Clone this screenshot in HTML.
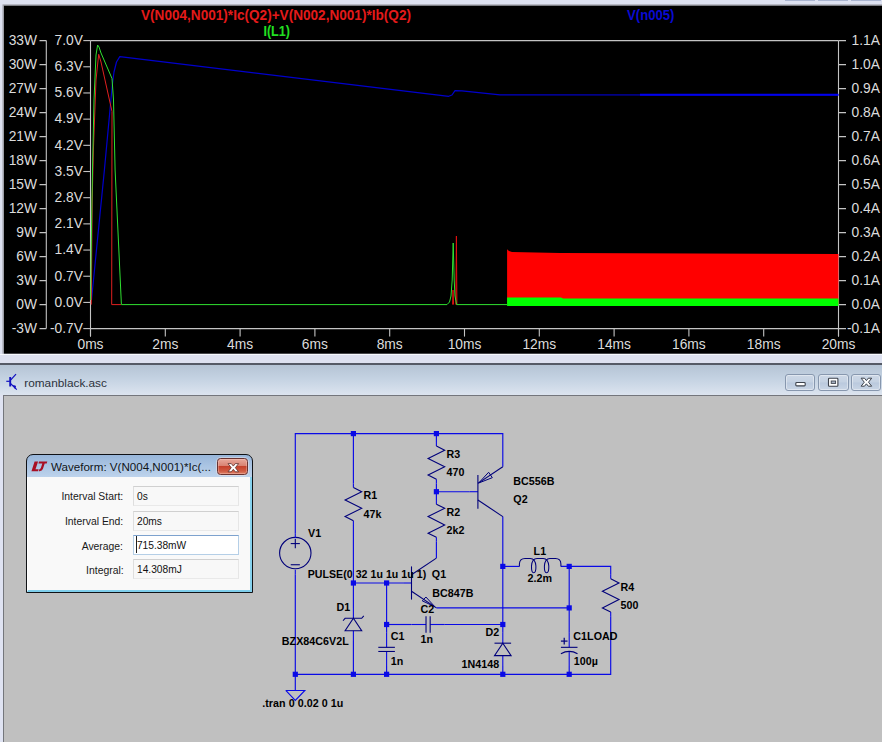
<!DOCTYPE html>
<html><head><meta charset="utf-8"><title>LTspice</title>
<style>
html,body{margin:0;padding:0;}
body{width:882px;height:742px;overflow:hidden;background:#c0c0c0;font-family:"Liberation Sans",sans-serif;position:relative;}
#top{position:absolute;left:0;top:0;width:882px;height:364px;background:#dde1f0;}
#topline{position:absolute;left:0;top:353.7px;width:882px;height:1.6px;background:#f6f8fd;}
#sep{position:absolute;left:0;top:362.6px;width:882px;height:2px;background:#555a66;}
#tbar{position:absolute;left:0;top:364.6px;width:882px;height:30px;background:linear-gradient(#b5c4d5,#c4d2e2 45%,#dce4ef 100%);}
#tbar2{position:absolute;left:0;top:394px;width:882px;height:348px;background:#dfe3f2;}
#client{position:absolute;left:2.5px;top:394.5px;width:879.5px;height:348px;background:#c0c0c0;border-left:1.3px solid #74767c;border-top:1.7px solid #74767c;box-sizing:border-box;}
svg{position:absolute;left:0;top:0;}
.plot text{font-size:13.8px;fill:#dcdcdc;}
.sch text{font-size:10.7px;font-weight:bold;fill:#000;letter-spacing:0.05px;}
.ttl{position:absolute;left:24.3px;top:374.2px;font-size:11.8px;color:#2c323c;line-height:18px;}
.wb{position:absolute;top:374.4px;height:16.3px;border:1px solid #8797ae;border-radius:3px;box-sizing:border-box;background:linear-gradient(#cdd8e6,#c4d1e2 48%,#bac9dd 52%,#c9d5e5);box-shadow:inset 0 0 0 1px rgba(255,255,255,0.4);}
#dlg{position:absolute;left:26px;top:453.6px;width:227px;height:139px;box-sizing:border-box;border:1.1px solid #101216;border-radius:7px 7px 0 0;background:linear-gradient(#98b6da,#bdd3ec 22px,#c4d9f1 24px,#cfe0f4);}
#dlgin{position:absolute;left:0;top:22.9px;right:0;bottom:0;background:#f9f9f9;border-left:1.4px solid #fff;border-right:2px solid #86d2ee;border-bottom:2.2px solid #7fcfec;box-sizing:border-box;}
.dt{position:absolute;left:24px;top:4.5px;font-size:11.6px;color:#101418;line-height:16px;white-space:nowrap;}
.fl{position:absolute;right:128.5px;font-size:11.8px;color:#181818;white-space:nowrap;transform-origin:right center;transform:scaleX(0.88);line-height:14px;}
.fi{position:absolute;left:105.8px;width:106.6px;height:20px;box-sizing:border-box;border:1px solid #dedede;border-top-color:#d0d0d0;border-bottom-color:#e9e9e9;border-right-color:#e6e6e6;background:#f8f8f8;font-size:11.6px;line-height:17.4px;}
.fi span{display:inline-block;transform-origin:left center;transform:scaleX(0.88);padding-left:3.4px;color:#111;}
#cls{position:absolute;left:189.8px;top:3.4px;width:31px;height:16.6px;box-sizing:border-box;border:1px solid #6a3230;border-radius:3.5px;box-shadow:0 0 0 0.8px rgba(255,235,230,0.55), inset 0 0 0 1px rgba(255,210,200,0.35);background:linear-gradient(#e8a99c,#d98272 45%,#c5412c 50%,#cf5a42 80%,#dd8268);}
</style></head><body>
<div id="top"></div>
<div id="tbar2"></div>
<div id="tbar"></div>
<div id="sep"></div>
<div id="client"></div>
<svg class="plot" width="882" height="364" viewBox="0 0 882 364">
<rect x="2.5" y="4.4" width="880" height="349.3" fill="#9c9ea6"/>
<rect x="4.0" y="5.8" width="879" height="347.8" fill="#000"/>
<path d="M90.5 40.6 H838.5 M90.5 328.6 H838.5 M90.5 40.6 V336.6 M838.5 40.6 V336.6" stroke="#c4c4c4" stroke-width="1.1" fill="none"/>
<path d="M46.3 40.6 V328.6" stroke="#c4c4c4" stroke-width="1.1" fill="none"/>
<path d="M39.5 40.6 H46.3 M838.5 40.6 H846.0" stroke="#c4c4c4" stroke-width="1.1"/>
<text x="37" y="44.9" text-anchor="end">33W</text>
<text x="880" y="44.9" text-anchor="end">1.1A</text>
<path d="M39.5 64.6 H46.3 M838.5 64.6 H846.0" stroke="#c4c4c4" stroke-width="1.1"/>
<text x="37" y="68.89999999999999" text-anchor="end">30W</text>
<text x="880" y="68.89999999999999" text-anchor="end">1.0A</text>
<path d="M39.5 88.6 H46.3 M838.5 88.6 H846.0" stroke="#c4c4c4" stroke-width="1.1"/>
<text x="37" y="92.89999999999999" text-anchor="end">27W</text>
<text x="880" y="92.89999999999999" text-anchor="end">0.9A</text>
<path d="M39.5 112.6 H46.3 M838.5 112.6 H846.0" stroke="#c4c4c4" stroke-width="1.1"/>
<text x="37" y="116.89999999999999" text-anchor="end">24W</text>
<text x="880" y="116.89999999999999" text-anchor="end">0.8A</text>
<path d="M39.5 136.6 H46.3 M838.5 136.6 H846.0" stroke="#c4c4c4" stroke-width="1.1"/>
<text x="37" y="140.9" text-anchor="end">21W</text>
<text x="880" y="140.9" text-anchor="end">0.7A</text>
<path d="M39.5 160.6 H46.3 M838.5 160.6 H846.0" stroke="#c4c4c4" stroke-width="1.1"/>
<text x="37" y="164.9" text-anchor="end">18W</text>
<text x="880" y="164.9" text-anchor="end">0.6A</text>
<path d="M39.5 184.6 H46.3 M838.5 184.6 H846.0" stroke="#c4c4c4" stroke-width="1.1"/>
<text x="37" y="188.9" text-anchor="end">15W</text>
<text x="880" y="188.9" text-anchor="end">0.5A</text>
<path d="M39.5 208.6 H46.3 M838.5 208.6 H846.0" stroke="#c4c4c4" stroke-width="1.1"/>
<text x="37" y="212.9" text-anchor="end">12W</text>
<text x="880" y="212.9" text-anchor="end">0.4A</text>
<path d="M39.5 232.6 H46.3 M838.5 232.6 H846.0" stroke="#c4c4c4" stroke-width="1.1"/>
<text x="37" y="236.9" text-anchor="end">9W</text>
<text x="880" y="236.9" text-anchor="end">0.3A</text>
<path d="M39.5 256.6 H46.3 M838.5 256.6 H846.0" stroke="#c4c4c4" stroke-width="1.1"/>
<text x="37" y="260.90000000000003" text-anchor="end">6W</text>
<text x="880" y="260.90000000000003" text-anchor="end">0.2A</text>
<path d="M39.5 280.6 H46.3 M838.5 280.6 H846.0" stroke="#c4c4c4" stroke-width="1.1"/>
<text x="37" y="284.90000000000003" text-anchor="end">3W</text>
<text x="880" y="284.90000000000003" text-anchor="end">0.1A</text>
<path d="M39.5 304.6 H46.3 M838.5 304.6 H846.0" stroke="#c4c4c4" stroke-width="1.1"/>
<text x="37" y="308.90000000000003" text-anchor="end">0W</text>
<text x="880" y="308.90000000000003" text-anchor="end">0.0A</text>
<path d="M39.5 328.6 H46.3 M838.5 328.6 H846.0" stroke="#c4c4c4" stroke-width="1.1"/>
<text x="37" y="332.90000000000003" text-anchor="end">-3W</text>
<text x="880" y="332.90000000000003" text-anchor="end">-0.1A</text>
<path d="M83.3 40.60 H90.5" stroke="#c4c4c4" stroke-width="1.1"/>
<text x="83" y="44.90" text-anchor="end">7.0V</text>
<path d="M83.3 66.78 H90.5" stroke="#c4c4c4" stroke-width="1.1"/>
<text x="83" y="71.08" text-anchor="end">6.3V</text>
<path d="M83.3 92.96 H90.5" stroke="#c4c4c4" stroke-width="1.1"/>
<text x="83" y="97.26" text-anchor="end">5.6V</text>
<path d="M83.3 119.15 H90.5" stroke="#c4c4c4" stroke-width="1.1"/>
<text x="83" y="123.45" text-anchor="end">4.9V</text>
<path d="M83.3 145.33 H90.5" stroke="#c4c4c4" stroke-width="1.1"/>
<text x="83" y="149.63" text-anchor="end">4.2V</text>
<path d="M83.3 171.51 H90.5" stroke="#c4c4c4" stroke-width="1.1"/>
<text x="83" y="175.81" text-anchor="end">3.5V</text>
<path d="M83.3 197.69 H90.5" stroke="#c4c4c4" stroke-width="1.1"/>
<text x="83" y="201.99" text-anchor="end">2.8V</text>
<path d="M83.3 223.87 H90.5" stroke="#c4c4c4" stroke-width="1.1"/>
<text x="83" y="228.17" text-anchor="end">2.1V</text>
<path d="M83.3 250.05 H90.5" stroke="#c4c4c4" stroke-width="1.1"/>
<text x="83" y="254.35" text-anchor="end">1.4V</text>
<path d="M83.3 276.24 H90.5" stroke="#c4c4c4" stroke-width="1.1"/>
<text x="83" y="280.54" text-anchor="end">0.7V</text>
<path d="M83.3 302.42 H90.5" stroke="#c4c4c4" stroke-width="1.1"/>
<text x="83" y="306.72" text-anchor="end">0.0V</text>
<path d="M83.3 328.60 H90.5" stroke="#c4c4c4" stroke-width="1.1"/>
<text x="83" y="332.90" text-anchor="end">-0.7V</text>
<path d="M90.50 328.6 V336.6" stroke="#c4c4c4" stroke-width="1.1"/>
<text x="90.50" y="349.1" text-anchor="middle">0ms</text>
<path d="M165.30 328.6 V336.6" stroke="#c4c4c4" stroke-width="1.1"/>
<text x="165.30" y="349.1" text-anchor="middle">2ms</text>
<path d="M240.10 328.6 V336.6" stroke="#c4c4c4" stroke-width="1.1"/>
<text x="240.10" y="349.1" text-anchor="middle">4ms</text>
<path d="M314.90 328.6 V336.6" stroke="#c4c4c4" stroke-width="1.1"/>
<text x="314.90" y="349.1" text-anchor="middle">6ms</text>
<path d="M389.70 328.6 V336.6" stroke="#c4c4c4" stroke-width="1.1"/>
<text x="389.70" y="349.1" text-anchor="middle">8ms</text>
<path d="M464.50 328.6 V336.6" stroke="#c4c4c4" stroke-width="1.1"/>
<text x="464.50" y="349.1" text-anchor="middle">10ms</text>
<path d="M539.30 328.6 V336.6" stroke="#c4c4c4" stroke-width="1.1"/>
<text x="539.30" y="349.1" text-anchor="middle">12ms</text>
<path d="M614.10 328.6 V336.6" stroke="#c4c4c4" stroke-width="1.1"/>
<text x="614.10" y="349.1" text-anchor="middle">14ms</text>
<path d="M688.90 328.6 V336.6" stroke="#c4c4c4" stroke-width="1.1"/>
<text x="688.90" y="349.1" text-anchor="middle">16ms</text>
<path d="M763.70 328.6 V336.6" stroke="#c4c4c4" stroke-width="1.1"/>
<text x="763.70" y="349.1" text-anchor="middle">18ms</text>
<path d="M838.50 328.6 V336.6" stroke="#c4c4c4" stroke-width="1.1"/>
<text x="838.50" y="349.1" text-anchor="middle">20ms</text>
<path d="M507.1 304.6 V249.2 L509 251 L512 252 L560 253 L838.5 254 V304.6 Z" fill="#ff0000"/>
<path d="M507.1 297.5 H561 L563 298.5 H838.5 V306 H507.1 Z" fill="#00ff00"/>
<path d="M91.5 300 L104.4 170 L112.3 85 L114 72 L116.5 62 L119.8 56.6 L448.7 96.3 L452 95 L455 90.6 L462 90.8 L500 94.9 L838.5 95" stroke="#0000cc" stroke-width="1.2" fill="none" stroke-linejoin="round"/>
<path d="M640 94.75 H838.5" stroke="#0000ee" stroke-width="2.1" fill="none"/>
<path d="M91.3 304.6 L92.2 200 L93.4 150 L96 80 L98.7 54.3 L101 62 L112 111.5 L111.7 304.6 H121" stroke="#e02020" stroke-width="1" fill="none"/>
<path d="M452.6 304.6 L453 290 L453.6 304.6 M455.8 304.6 L456.4 236 L456.9 304.6" stroke="#e01010" stroke-width="1" fill="none"/>
<path d="M90.6 300 L91.5 230 L92.5 170 L94 100 L96 55 L97.6 45 L99 47 L101 53 L112 78.5 L113.5 100 L115.1 170 L121.4 304.6 H447 L449.5 302 L451 296 L452.2 280 L453.2 243 L454.2 280 L455 296 L456.6 304.6 H507.1" stroke="#30e030" stroke-width="1" fill="none"/>
<g font-weight="bold" font-size="13.4px">
<text x="141.0" y="19.6" style="fill:#e41a1a;font-size:14.6px" textLength="270" lengthAdjust="spacingAndGlyphs">V(N004,N001)*Ic(Q2)+V(N002,N001)*Ib(Q2)</text>
<text x="263.4" y="35.5" style="fill:#22e022;font-size:14.6px" textLength="26.6" lengthAdjust="spacingAndGlyphs">I(L1)</text>
<text x="627" y="19.6" style="fill:#0a0ad2;font-size:14.6px" textLength="47.5" lengthAdjust="spacingAndGlyphs">V(n005)</text>
</g>
</svg>
<div id="topline"></div>
<div style="position:absolute;left:785px;top:0;width:30px;height:1px;background:#a9b4cf"></div><div style="position:absolute;left:818px;top:0;width:30px;height:1px;background:#a9b4cf"></div><div style="position:absolute;left:851px;top:0;width:29.5px;height:1px;background:#a9b4cf"></div>
<svg class="sch" width="882" height="742" viewBox="0 0 882 742">
<path d="M295.3 533.2 L295.3 433.6 L502.8 433.6 L502.8 466.8" stroke="#0a0ae6" fill="none" stroke-width="1.15"/>
<path d="M353.4 433.6 L353.4 483.4" stroke="#0a0ae6" fill="none" stroke-width="1.15"/>
<path d="M353.4 524.9 L353.4 607.9" stroke="#0a0ae6" fill="none" stroke-width="1.15"/>
<path d="M353.4 641.1 L353.4 674.3" stroke="#0a0ae6" fill="none" stroke-width="1.15"/>
<path d="M436.4 433.6 L436.4 441.9" stroke="#0a0ae6" fill="none" stroke-width="1.15"/>
<path d="M436.4 483.4 L436.4 500.0" stroke="#0a0ae6" fill="none" stroke-width="1.15"/>
<path d="M436.4 491.7 L469.6 491.7" stroke="#0a0ae6" fill="none" stroke-width="1.15"/>
<path d="M436.4 541.5 L436.4 558.1" stroke="#0a0ae6" fill="none" stroke-width="1.15"/>
<path d="M353.4 583.0 L403.2 583.0" stroke="#0a0ae6" fill="none" stroke-width="1.15"/>
<path d="M386.6 583.0 L386.6 632.8" stroke="#0a0ae6" fill="none" stroke-width="1.15"/>
<path d="M386.6 666.0 L386.6 674.3" stroke="#0a0ae6" fill="none" stroke-width="1.15"/>
<path d="M386.6 624.5 L411.5 624.5" stroke="#0a0ae6" fill="none" stroke-width="1.15"/>
<path d="M444.7 624.5 L502.8 624.5" stroke="#0a0ae6" fill="none" stroke-width="1.15"/>
<path d="M436.4 607.9 L569.2 607.9" stroke="#0a0ae6" fill="none" stroke-width="1.15"/>
<path d="M502.8 516.6 L502.8 632.8" stroke="#0a0ae6" fill="none" stroke-width="1.15"/>
<path d="M502.8 666.0 L502.8 674.3" stroke="#0a0ae6" fill="none" stroke-width="1.15"/>
<path d="M502.8 566.4 L519.4 566.4" stroke="#0a0ae6" fill="none" stroke-width="1.15"/>
<path d="M560.9 566.4 L610.7 566.4 L610.7 574.7" stroke="#0a0ae6" fill="none" stroke-width="1.15"/>
<path d="M610.7 616.2 L610.7 674.3 L295.3 674.3" stroke="#0a0ae6" fill="none" stroke-width="1.15"/>
<path d="M569.2 566.4 L569.2 632.8" stroke="#0a0ae6" fill="none" stroke-width="1.15"/>
<path d="M569.2 666.0 L569.2 674.3" stroke="#0a0ae6" fill="none" stroke-width="1.15"/>
<path d="M295.3 574.7 L295.3 690.9" stroke="#0a0ae6" fill="none" stroke-width="1.15"/>
<path d="M353.4 483.4 L353.4 487.55" stroke="#0a0ae6" fill="none" stroke-width="1.1"/>
<path d="M353.4 520.75 L353.4 524.9" stroke="#0a0ae6" fill="none" stroke-width="1.1"/>
<path d="M353.4 487.55 L361.7 491.7 L345.1 500.0 L361.7 508.3 L345.1 516.6 L353.4 520.75" stroke="#00007a" fill="none" stroke-width="1.1"/>
<path d="M436.4 441.9 L436.4 446.05" stroke="#0a0ae6" fill="none" stroke-width="1.1"/>
<path d="M436.4 479.25 L436.4 483.4" stroke="#0a0ae6" fill="none" stroke-width="1.1"/>
<path d="M436.4 446.05 L444.7 450.2 L428.1 458.5 L444.7 466.8 L428.1 475.1 L436.4 479.25" stroke="#00007a" fill="none" stroke-width="1.1"/>
<path d="M436.4 500.0 L436.4 504.15" stroke="#0a0ae6" fill="none" stroke-width="1.1"/>
<path d="M436.4 537.35 L436.4 541.5" stroke="#0a0ae6" fill="none" stroke-width="1.1"/>
<path d="M436.4 504.15 L444.7 508.3 L428.1 516.6 L444.7 524.9 L428.1 533.2 L436.4 537.35" stroke="#00007a" fill="none" stroke-width="1.1"/>
<path d="M610.7 574.7 L610.7 578.85" stroke="#0a0ae6" fill="none" stroke-width="1.1"/>
<path d="M610.7 612.05 L610.7 616.2" stroke="#0a0ae6" fill="none" stroke-width="1.1"/>
<path d="M610.7 578.85 L619.0 583.0 L602.4 591.3 L619.0 599.6 L602.4 607.9 L610.7 612.05" stroke="#00007a" fill="none" stroke-width="1.1"/>
<circle cx="295.3" cy="553.1" r="15.7" stroke="#00007a" fill="none" stroke-width="1.1"/>
<path d="M295.3 533.2 L295.3 538.18" stroke="#0a0ae6" fill="none" stroke-width="1.1"/>
<path d="M295.3 569.72 L295.3 574.7" stroke="#0a0ae6" fill="none" stroke-width="1.1"/>
<path d="M290.73 543.58 L299.86 543.58" stroke="#00007a" fill="none" stroke-width="1.1"/>
<path d="M295.3 539.01 L295.3 548.14" stroke="#00007a" fill="none" stroke-width="1.1"/>
<path d="M290.73 564.74 L299.86 564.74" stroke="#00007a" fill="none" stroke-width="1.1"/>
<path d="M285.75 690.49 L304.84 690.49 L295.3 700.45 L285.75 690.49" stroke="#0a0ae6" fill="none" stroke-width="1.1"/>
<path d="M469.6 491.7 L477.9 491.7" stroke="#0a0ae6" fill="none" stroke-width="1.1"/>
<path d="M477.9 475.1 L477.9 508.8" stroke="#00007a" fill="none" stroke-width="1.1"/>
<path d="M477.9 483.4 L502.8 466.8" stroke="#00007a" fill="none" stroke-width="1.1"/>
<path d="M477.9 500.0 L502.8 516.6" stroke="#00007a" fill="none" stroke-width="1.1"/>
<path d="M478.73 482.99 L488.61 472.28 L492.34 477.67 Z" stroke="#00007a" fill="none" stroke-width="1"/>
<path d="M403.2 583.0 L411.5 583.0" stroke="#0a0ae6" fill="none" stroke-width="1.1"/>
<path d="M411.5 566.4 L411.5 599.6" stroke="#00007a" fill="none" stroke-width="1.1"/>
<path d="M411.5 574.7 L436.4 558.1" stroke="#00007a" fill="none" stroke-width="1.1"/>
<path d="M411.5 591.3 L436.4 607.9" stroke="#00007a" fill="none" stroke-width="1.1"/>
<path d="M434.74 606.66 L425.94 597.03 L422.29 600.85 Z" stroke="#00007a" fill="none" stroke-width="1"/>
<path d="M353.4 607.9 L353.4 618.28" stroke="#0a0ae6" fill="none" stroke-width="1.1"/>
<path d="M353.4 630.73 L353.4 641.1" stroke="#0a0ae6" fill="none" stroke-width="1.1"/>
<path d="M345.1 630.73 L361.7 630.73 L353.4 618.28 Z" stroke="#00007a" fill="none" stroke-width="1.1"/>
<path d="M343.02 620.77 L345.1 618.28 L361.7 618.28 L363.77 615.79" stroke="#00007a" fill="none" stroke-width="1.1"/>
<path d="M502.8 632.8 L502.8 643.18" stroke="#0a0ae6" fill="none" stroke-width="1.1"/>
<path d="M502.8 655.62 L502.8 666.0" stroke="#0a0ae6" fill="none" stroke-width="1.1"/>
<path d="M494.5 655.62 L511.1 655.62 L502.8 643.18 Z" stroke="#00007a" fill="none" stroke-width="1.1"/>
<path d="M494.5 643.18 L511.1 643.18" stroke="#00007a" fill="none" stroke-width="1.1"/>
<path d="M386.6 632.8 L386.6 647.33" stroke="#0a0ae6" fill="none" stroke-width="1.1"/>
<path d="M386.6 651.48 L386.6 666.0" stroke="#0a0ae6" fill="none" stroke-width="1.1"/>
<path d="M378.3 647.33 L394.9 647.33" stroke="#00007a" fill="none" stroke-width="1.1"/>
<path d="M378.3 651.48 L394.9 651.48" stroke="#00007a" fill="none" stroke-width="1.1"/>
<path d="M411.5 624.5 L426.02 624.5" stroke="#0a0ae6" fill="none" stroke-width="1.1"/>
<path d="M430.17 624.5 L444.7 624.5" stroke="#0a0ae6" fill="none" stroke-width="1.1"/>
<path d="M426.02 616.2 L426.02 632.8" stroke="#00007a" fill="none" stroke-width="1.1"/>
<path d="M430.17 616.2 L430.17 632.8" stroke="#00007a" fill="none" stroke-width="1.1"/>
<path d="M569.2 632.8 L569.2 647.33" stroke="#0a0ae6" fill="none" stroke-width="1.1"/>
<path d="M569.2 651.89 L569.2 666.0" stroke="#0a0ae6" fill="none" stroke-width="1.1"/>
<path d="M560.9 647.33 L577.5 647.33" stroke="#00007a" fill="none" stroke-width="1.1"/>
<path d="M560.9 653.72 Q569.2 648.99 577.5 653.72" stroke="#00007a" fill="none" stroke-width="1.2"/>
<path d="M560.9 641.1 L567.54 641.1" stroke="#00007a" fill="none" stroke-width="1.2"/>
<path d="M564.22 637.78 L564.22 644.42" stroke="#00007a" fill="none" stroke-width="1.2"/>
<path d="M519.4 566.5 L519.4 564 Q519.6 558.4 525 558.4 L530.3 558.4 Q535.3 558.4 535.9 566 Q536.1 572.8 533.7 572.8 Q531.3 572.8 531.5 566 Q532 558.4 537 558.4 L543.2 558.4 Q548.2 558.4 548.8 566 Q549 572.8 546.6 572.8 Q544.2 572.8 544.4 566 Q544.9 558.4 549.9 558.4 L555.4 558.4 Q560.9 558.4 560.9 564 L560.9 566.5" stroke="#00007a" fill="none" stroke-width="1.05"/>
<rect x="350.80" y="431.00" width="5.2" height="5.2" fill="#0a0ae6"/>
<rect x="433.80" y="431.00" width="5.2" height="5.2" fill="#0a0ae6"/>
<rect x="433.80" y="489.10" width="5.2" height="5.2" fill="#0a0ae6"/>
<rect x="350.80" y="580.40" width="5.2" height="5.2" fill="#0a0ae6"/>
<rect x="384.00" y="580.40" width="5.2" height="5.2" fill="#0a0ae6"/>
<rect x="384.00" y="621.90" width="5.2" height="5.2" fill="#0a0ae6"/>
<rect x="500.20" y="563.80" width="5.2" height="5.2" fill="#0a0ae6"/>
<rect x="566.60" y="563.80" width="5.2" height="5.2" fill="#0a0ae6"/>
<rect x="566.60" y="605.30" width="5.2" height="5.2" fill="#0a0ae6"/>
<rect x="500.20" y="621.90" width="5.2" height="5.2" fill="#0a0ae6"/>
<rect x="292.70" y="671.70" width="5.2" height="5.2" fill="#0a0ae6"/>
<rect x="350.80" y="671.70" width="5.2" height="5.2" fill="#0a0ae6"/>
<rect x="384.00" y="671.70" width="5.2" height="5.2" fill="#0a0ae6"/>
<rect x="500.20" y="671.70" width="5.2" height="5.2" fill="#0a0ae6"/>
<rect x="566.60" y="671.70" width="5.2" height="5.2" fill="#0a0ae6"/>
<text x="308" y="536.8">V1</text>
<text x="363.4" y="498.6">R1</text>
<text x="363.4" y="518">47k</text>
<text x="446.4" y="457.5">R3</text>
<text x="446.4" y="475.8">470</text>
<text x="446.4" y="515.8">R2</text>
<text x="446.4" y="534.3">2k2</text>
<text x="513.3" y="484.8">BC556B</text>
<text x="513.3" y="503">Q2</text>
<text x="307.7" y="577.7" textLength="118.6" lengthAdjust="spacingAndGlyphs">PULSE(0 32 1u 1u 1u 1)</text>
<text x="431.8" y="577.7">Q1</text>
<text x="432.3" y="596.7">BC847B</text>
<text x="336.5" y="610.9">D1</text>
<text x="281.8" y="644.9">BZX84C6V2L</text>
<text x="390.7" y="640.3">C1</text>
<text x="390.7" y="664.8">1n</text>
<text x="420.6" y="613">C2</text>
<text x="420.6" y="642.9">1n</text>
<text x="485.4" y="635.6">D2</text>
<text x="461.4" y="668.3">1N4148</text>
<text x="573.3" y="639.7">C1LOAD</text>
<text x="573.8" y="664.8">100µ</text>
<text x="620.6" y="590.5">R4</text>
<text x="620.6" y="609">500</text>
<text x="533.6" y="554.7">L1</text>
<text x="527.5" y="582.3" textLength="24.6" lengthAdjust="spacingAndGlyphs">2.2m</text>
<text x="262.2" y="707" textLength="81.1" lengthAdjust="spacingAndGlyphs">.tran 0 0.02 0 1u</text>
</svg>
<!-- title bar -->
<svg width="882" height="742" viewBox="0 0 882 742">
<g stroke="#1010c0" fill="none" stroke-width="1.2">
<path d="M6.3 381.3 H9.8"/>
<path d="M10.2 377 V386.5" stroke-width="1.9"/>
<path d="M10.8 379.8 L16 374.2"/>
<path d="M10.8 383.8 L16.8 389.6"/>
<path d="M13.2 385.6 L15.6 386 L15 388.4 Z" fill="#1010c0" stroke-width="0.8"/>
</g>
</svg>
<div class="ttl">romanblack.asc</div>
<div class="wb" style="left:785.4px;width:30px;"></div>
<div class="wb" style="left:818.3px;width:30.5px;"></div>
<div class="wb" style="left:851.3px;width:29.4px;"></div>
<svg width="882" height="742" viewBox="0 0 882 742">
<rect x="795.8" y="382.5" width="9.4" height="3.4" rx="0.9" fill="#fff" stroke="#3c424c" stroke-width="1.1"/>
<rect x="828.5" y="378.3" width="9.4" height="8" rx="0.8" fill="#fff" stroke="#3c424c" stroke-width="1.1"/>
<rect x="831.2" y="381.0" width="4.4" height="2.4" fill="#aab6c8" stroke="#3c424c" stroke-width="0.9"/>
<path d="M861.10 378.20 L864.50 378.20 L866.40 380.60 L868.30 378.20 L871.70 378.20 L868.51 382.20 L871.70 386.20 L868.30 386.20 L866.40 383.80 L864.50 386.20 L861.10 386.20 L864.29 382.20 Z" fill="#fff" stroke="#3c424c" stroke-width="1" stroke-linejoin="round"/>
</svg>
<!-- dialog -->
<div id="dlg">
<div id="dlgin"></div>
<div class="dt">Waveform: V(N004,N001)*Ic(...</div>
<div id="cls"></div>
<svg width="226" height="138" viewBox="0 0 226 138" style="left:0;top:0">
<g fill="#a80f24" stroke="none" transform="translate(0.6,0.6) scale(0.92,0.96)">
<path d="M7.6 6.2 L11.4 6.2 L8.6 14.2 L12 14.2 L11.4 16.2 L4.2 16.2 Z"/>
<path d="M12.4 6.2 L21.4 6.2 L20.8 8.2 L18.6 8.2 L16.6 14 Q15.8 16.2 13 16.2 L12.2 16.2 L12.8 14.2 Q14 14.2 14.4 13 L16 8.2 L11.8 8.2 Z"/>
</g>
<path d="M201.00 8.60 L204.30 8.60 L206.30 11.10 L208.30 8.60 L211.60 8.60 L208.35 12.70 L211.60 16.80 L208.30 16.80 L206.30 14.30 L204.30 16.80 L201.00 16.80 L204.25 12.70 Z" fill="#fff" stroke="#5a2d2a" stroke-width="0.8" stroke-linejoin="round"/>
</svg>
<div class="fl" style="top:34.9px">Interval Start:</div>
<div class="fl" style="top:59.9px">Interval End:</div>
<div class="fl" style="top:84px">Average:</div>
<div class="fl" style="top:108.5px">Integral:</div>
<div class="fi" style="top:31.3px"><span>0s</span></div>
<div class="fi" style="top:56.5px"><span>20ms</span></div>
<div class="fi" style="top:80.2px;border-color:#7da2ce #b5cfe7 #b5cfe7 #b5cfe7;background:#fff;"><span style="border-left:1px solid #000;padding-left:0;margin-left:2.6px;">715.38mW</span></div>
<div class="fi" style="top:104.7px"><span>14.308mJ</span></div>
</div>
</body></html>
